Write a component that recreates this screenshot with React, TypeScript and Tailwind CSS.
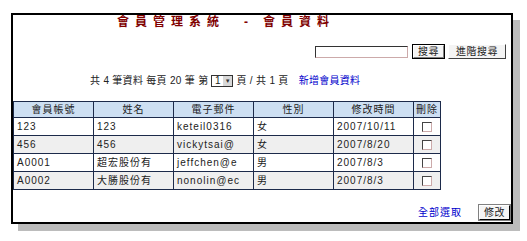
import React from 'react';

const rows = [
  { id: '123', name: '123', email: 'keteil0316', sex: '女', date: '2007/10/11' },
  { id: '456', name: '456', email: 'vickytsai@', sex: '女', date: '2007/8/20' },
  { id: 'A0001', name: '超宏股份有', email: 'jeffchen@e', sex: '男', date: '2007/8/3' },
  { id: 'A0002', name: '大勝股份有', email: 'nonolin@ec', sex: '男', date: '2007/8/3' },
];

const font = { fontFamily: '"Liberation Sans", "Noto Sans CJK TC", sans-serif' };

function Check() {
  return <span className="inline-block h-[10px] w-[10px] border border-[#caa] border-t-[#444] border-l-[#444] bg-white" />;
}

function Button({ children, def }: { children: React.ReactNode; def?: boolean }) {
  return (
    <span className={def ? 'inline-flex border border-black' : 'inline-flex'}>
      <span
        className={
          def
            ? 'inline-flex h-[13px] items-center border border-t-white border-l-white border-r-[#808080] border-b-[#808080] bg-[#f4f4f4] px-[4px] text-[10px] leading-none tracking-[0.5px] text-[#222]'
            : 'inline-flex h-[15px] items-center border border-t-white border-l-white border-r-[#404040] border-b-[#404040] bg-[#f4f4f4] px-[7px] text-[10px] leading-none tracking-[0.5px] text-[#222]'
        }
      >
        {children}
      </span>
    </span>
  );
}

export default function App() {
  return (
    <div className="min-h-screen bg-white pt-[13px] pl-[11px] text-[#222]" style={font}>
      <div className="flex h-[211px] w-[502px] flex-col border-2 border-black bg-white shadow-[7px_7px_0_#bcbcbc]">
        <div className="flex h-[14px] items-center pl-[104px] text-[12px] font-bold leading-none text-[#800000]">
          <span className="tracking-[6px]">會員管理系統</span>
          <span className="ml-[19px] mr-[15px]">-</span>
          <span className="tracking-[6px]">會員資料</span>
        </div>

        <div className="mt-[15px] flex items-center justify-end pr-[5px]">
          <span className="mr-[4px] h-[12px] w-[93px] border border-t-[#333] border-l-[#333] border-r-[#caa] border-b-[#caa] bg-white" />
          <Button def>搜尋</Button>
          <span className="w-[3px]" />
          <Button>進階搜尋</Button>
        </div>

        <div className="mt-[16px] flex items-center pl-[77px] text-[10px] leading-none tracking-[0.3px]">
          <span>共 4 筆資料 每頁 20 筆 第</span>
          <span className="mx-[3px] inline-flex h-[12px] items-stretch border border-[#333] bg-white">
            <span className="flex w-[11px] items-center justify-center text-[10px]">1</span>
            <span className="flex w-[9px] items-center justify-center bg-[#d8d8d8] text-[6px] text-[#333]">▼</span>
          </span>
          <span>頁 / 共 1 頁</span>
          <span className="ml-[10px] text-[#0000cc]">新增會員資料</span>
        </div>

        <table className="mt-[14px] w-[427px] table-fixed border-collapse text-[10px] leading-none tracking-[1px]">
          <colgroup>
            <col className="w-[80px]" />
            <col className="w-[80px]" />
            <col className="w-[80px]" />
            <col className="w-[80px]" />
            <col className="w-[80px]" />
            <col className="w-[27px]" />
          </colgroup>
          <thead>
            <tr className="h-[16px] bg-[#cddff2]">
              {['會員帳號', '姓名', '電子郵件', '性別', '修改時間', '刪除'].map((h) => (
                <th key={h} className="border border-[#1c2a4a] px-0 text-center font-normal">
                  {h}
                </th>
              ))}
            </tr>
          </thead>
          <tbody>
            {rows.map((r, i) => (
              <tr key={r.id} className={i % 2 === 0 ? 'h-[18px] bg-white' : 'h-[18px] bg-[#efefef]'}>
                <td className="border border-[#1c2a4a] px-[3px]">{r.id}</td>
                <td className="border border-[#1c2a4a] px-[3px]">{r.name}</td>
                <td className="overflow-hidden whitespace-nowrap border border-[#1c2a4a] px-[3px]">{r.email}</td>
                <td className="border border-[#1c2a4a] px-[3px]">{r.sex}</td>
                <td className="border border-[#1c2a4a] px-[3px]">{r.date}</td>
                <td className="border border-[#1c2a4a] text-center align-middle">
                  <span className="flex items-center justify-center">
                    <Check />
                  </span>
                </td>
              </tr>
            ))}
          </tbody>
        </table>

        <div className="mt-auto mb-[2px] flex items-center justify-end pr-[1px]">
          <span className="mr-[17px] text-[10px] tracking-[1px] text-[#0000cc]">全部選取</span>
          <span className="inline-flex h-[15px] items-center border border-t-white border-l-white border-r-black border-b-black bg-[#f4f4f4] px-[4px] text-[10px] leading-none tracking-[0.5px] outline outline-1 outline-[#808080]">
            修改
          </span>
        </div>
      </div>
    </div>
  );
}
